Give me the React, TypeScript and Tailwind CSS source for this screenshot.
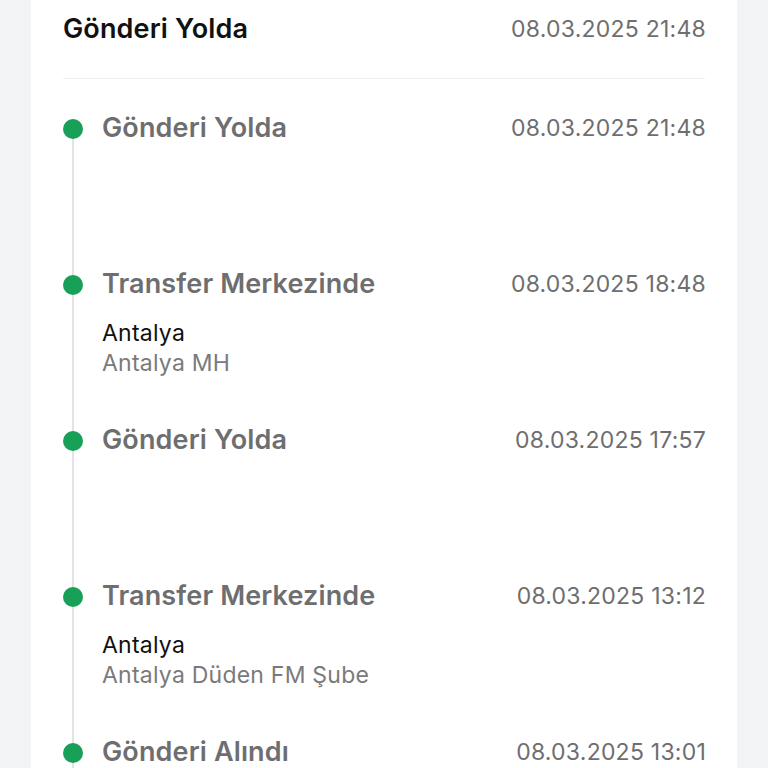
import React from "react";

interface TrackingEvent {
  title: string;
  date: string;
  city?: string;
  branch?: string;
}

const events: TrackingEvent[] = [
  { title: "Gönderi Yolda", date: "08.03.2025 21:48" },
  {
    title: "Transfer Merkezinde",
    date: "08.03.2025 18:48",
    city: "Antalya",
    branch: "Antalya MH",
  },
  { title: "Gönderi Yolda", date: "08.03.2025 17:57" },
  {
    title: "Transfer Merkezinde",
    date: "08.03.2025 13:12",
    city: "Antalya",
    branch: "Antalya Düden FM Şube",
  },
  { title: "Gönderi Alındı", date: "08.03.2025 13:01" },
];

const TimelineItem: React.FC<{ event: TrackingEvent; first: boolean }> = ({
  event,
  first,
}) => (
  <div className="flex h-[156px] gap-[19px]">
    <div className="flex w-5 shrink-0 flex-col items-center">
      <div className={`h-[7px] w-[2px] ${first ? "bg-transparent" : "bg-[#e3e3e5]"}`} />
      <div className="h-5 w-5 shrink-0 rounded-full bg-[#18a058]" />
      <div className="w-[2px] flex-1 bg-[#e3e3e5]" />
    </div>
    <div className="min-w-0 flex-1">
      <div className="flex items-center justify-between">
        <span className="text-[27px] font-semibold leading-8 tracking-[0.005em] text-[#6e6e70]">
          {event.title}
        </span>
        <span className="-mr-[1px] text-[23px] leading-8 tracking-[0.01em] text-[#6e6e70]">
          {event.date}
        </span>
      </div>
      {event.city && (
        <div className="mt-[18px]">
          <p className="text-[23px] leading-[30px] tracking-[0.01em] text-[#111111]">
            {event.city}
          </p>
          <p className="text-[23px] leading-[30px] tracking-[0.01em] text-[#7a7a7c]">
            {event.branch}
          </p>
        </div>
      )}
    </div>
  </div>
);

export default function App() {
  return (
    <div
      className="h-[768px] overflow-hidden bg-[#f3f4f6] px-[31px]"
      style={{ fontFamily: "Inter, 'Noto Sans', sans-serif" }}
    >
      <div className="h-full w-[706px] bg-white px-8">
        <header className="flex items-center justify-between pt-[13px] pb-[33px]">
          <h1 className="text-[27px] font-semibold leading-8 tracking-[0.005em] text-[#111111]">
            Gönderi Yolda
          </h1>
          <span className="-mr-[1px] text-[23px] leading-8 tracking-[0.01em] text-[#6e6e70]">
            08.03.2025 21:48
          </span>
        </header>
        <div className="h-px bg-[#f0f0f2]" />
        <div className="mt-[33px]">
          {events.map((event, i) => (
            <TimelineItem key={i} event={event} first={i === 0} />
          ))}
        </div>
      </div>
    </div>
  );
}
